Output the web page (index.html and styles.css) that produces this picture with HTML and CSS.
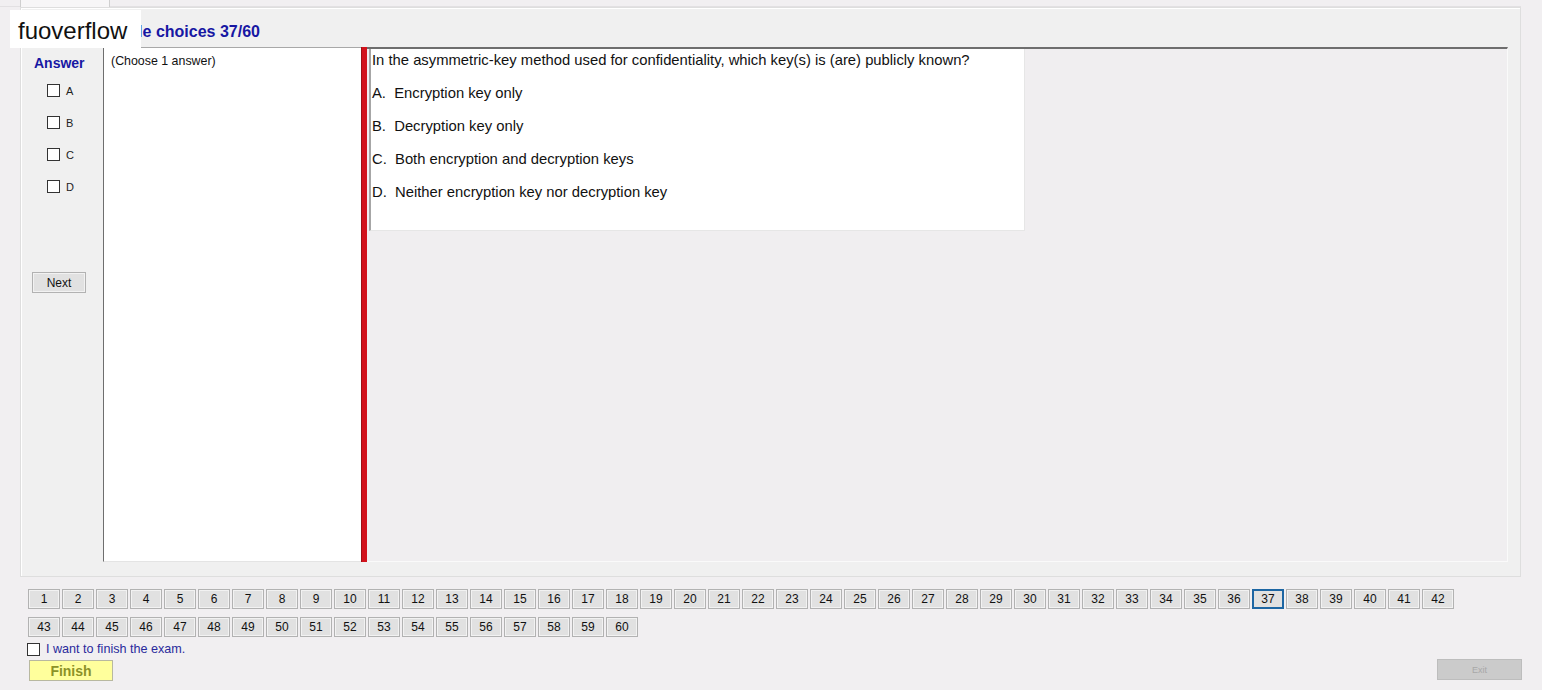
FILE: index.html
```html
<!DOCTYPE html>
<html>
<head>
<meta charset="utf-8">
<link rel="stylesheet" href="styles.css">
</head>
<body>
<div class="tabs"><div class="tab"></div></div>
<div class="panel">
  <div class="title">Multiple choices 37/60</div>
  <div class="content">
    <div class="answers">
      <div class="ans-head">Answer</div>
      <div class="opts">
        <label class="opt"><span class="cb"></span><span>A</span></label>
        <label class="opt"><span class="cb"></span><span>B</span></label>
        <label class="opt"><span class="cb"></span><span>C</span></label>
        <label class="opt"><span class="cb"></span><span>D</span></label>
      </div>
      <div class="btn next">Next</div>
    </div>
    <div class="hint">(Choose 1 answer)</div>
    <div class="splitter"></div>
    <div class="qarea">
      <div class="qbox">
        <p>In the asymmetric-key method used for confidentiality, which key(s) is (are) publicly known?</p>
        <p>A.&nbsp; Encryption key only</p>
        <p>B.&nbsp; Decryption key only</p>
        <p>C.&nbsp; Both encryption and decryption keys</p>
        <p>D.&nbsp; Neither encryption key nor decryption key</p>
      </div>
    </div>
  </div>
</div>
<div class="nav">
  <div class="row">
    <div class="btn num">1</div><div class="btn num">2</div><div class="btn num">3</div><div class="btn num">4</div><div class="btn num">5</div><div class="btn num">6</div><div class="btn num">7</div><div class="btn num">8</div><div class="btn num">9</div><div class="btn num">10</div><div class="btn num">11</div><div class="btn num">12</div><div class="btn num">13</div><div class="btn num">14</div><div class="btn num">15</div><div class="btn num">16</div><div class="btn num">17</div><div class="btn num">18</div><div class="btn num">19</div><div class="btn num">20</div><div class="btn num">21</div><div class="btn num">22</div><div class="btn num">23</div><div class="btn num">24</div><div class="btn num">25</div><div class="btn num">26</div><div class="btn num">27</div><div class="btn num">28</div><div class="btn num">29</div><div class="btn num">30</div><div class="btn num">31</div><div class="btn num">32</div><div class="btn num">33</div><div class="btn num">34</div><div class="btn num">35</div><div class="btn num">36</div><div class="btn num current">37</div><div class="btn num">38</div><div class="btn num">39</div><div class="btn num">40</div><div class="btn num">41</div><div class="btn num">42</div>
  </div>
  <div class="row">
    <div class="btn num">43</div><div class="btn num">44</div><div class="btn num">45</div><div class="btn num">46</div><div class="btn num">47</div><div class="btn num">48</div><div class="btn num">49</div><div class="btn num">50</div><div class="btn num">51</div><div class="btn num">52</div><div class="btn num">53</div><div class="btn num">54</div><div class="btn num">55</div><div class="btn num">56</div><div class="btn num">57</div><div class="btn num">58</div><div class="btn num">59</div><div class="btn num">60</div>
  </div>
</div>
<label class="finish-check"><span class="cb"></span><span>I want to finish the exam.</span></label>
<div class="footer">
  <div class="btn finish">Finish</div>
  <div class="btn exit">Exit</div>
</div>
<div class="watermark">fuoverflow</div>
</body>
</html>
```
FILE: styles.css
```css
* { box-sizing: border-box; }
html, body { margin: 0; padding: 0; }
body {
  width: 1542px;
  height: 690px;
  overflow: hidden;
  background: #f1eff1;
  font-family: "Liberation Sans", Arial, sans-serif;
  color: #111;
  position: relative;
}
.tabs {
  height: 7px;
  padding-left: 20px;
  border-bottom: 1px solid #e2e0e2;
  margin-right: 21px;
}
.tab {
  width: 90px;
  height: 7px;
  border-left: 1px solid #cfcfcf;
  border-right: 1px solid #cfcfcf;
  background: #f7f6f7;
}
.panel {
  margin-left: 20px;
  width: 1501px;
  height: 570px;
  background: #f0f0f0;
  border: 1px solid #dedede;
  box-shadow: inset 1px 1px 0 #fff;
  display: flex;
  flex-direction: column;
}
.title {
  height: 39px;
  padding-top: 15px;
  padding-left: 70px;
  font-weight: bold;
  font-size: 16px;
  line-height: 18px;
  color: #1717a3;
}
.content {
  display: flex;
  height: 515px;
}
.answers {
  width: 82px;
  padding-top: 8px;
  display: flex;
  flex-direction: column;
}
.ans-head {
  font-weight: bold;
  font-size: 14px;
  line-height: 16px;
  color: #1717a3;
  padding-left: 13px;
}
.opts {
  margin-top: 13px;
  display: flex;
  flex-direction: column;
  gap: 19px;
  padding-left: 26px;
}
.opt {
  display: flex;
  align-items: center;
  gap: 6px;
  height: 13px;
  font-size: 11px;
  color: #222;
}
.cb {
  display: inline-block;
  width: 13px;
  height: 13px;
  border: 1px solid #333;
  background: #fff;
}
.btn {
  display: flex;
  align-items: center;
  justify-content: center;
  background: #e1e1e1;
  border: 1px solid #b2b2b2;
  box-shadow: inset 0 0 0 1px #f2f2f2;
  font-size: 12px;
  color: #111;
}
.next {
  margin-top: 79px;
  margin-left: 11px;
  width: 54px;
  height: 21px;
}
.hint {
  width: 258px;
  background: #fff;
  border-left: 1px solid #6e6e6e;
  border-top: 1px solid #a8a8a8;
  border-bottom: 1px solid #e4e4e4;
  padding: 6px 0 0 7px;
  font-size: 12.4px;
  line-height: 14px;
}
.splitter {
  width: 6px;
  background: #d2121c;
  border-left: 1px solid #9e1016;
}
.qarea {
  width: 1141px;
  background: #f0eef0;
  border-top: 2px solid #6e6e6e;
  border-right: 1px solid #fafafa;
  border-bottom: 1px solid #fafafa;
  padding-left: 2px;
}
.qbox {
  width: 656px;
  height: 182px;
  background: #fff;
  border-left: 2px solid #a6a6a6;
  border-bottom: 1px solid #e6e6e6;
  border-right: 1px solid #e6e6e6;
  padding: 3px 0 0 1px;
}
.qbox p {
  margin: 0 0 17px;
  font-size: 14.8px;
  line-height: 16px;
  color: #111;
}
.nav {
  margin-top: 12px;
  padding-left: 28px;
  display: flex;
  flex-direction: column;
  gap: 8px;
}
.row {
  display: flex;
  gap: 2px;
}
.num {
  width: 32px;
  height: 20px;
}
.num.current {
  border: 2px solid #1d66a3;
  box-shadow: none;
}
.finish-check {
  margin-top: 5px;
  padding-left: 27px;
  display: flex;
  align-items: center;
  gap: 6px;
  height: 14px;
  font-size: 12.6px;
  color: #2a2a9c;
}
.footer {
  margin-top: 4px;
  padding-left: 29px;
  padding-right: 20px;
  display: flex;
  justify-content: space-between;
  align-items: flex-start;
}
.finish {
  width: 84px;
  height: 21px;
  background: #ffff9c;
  border-color: #b8b8a0;
  box-shadow: none;
  font-weight: bold;
  font-size: 14px;
  color: #8c9228;
}
.exit {
  margin-top: -1px;
  width: 85px;
  height: 21px;
  background: #cbcbcb;
  border-color: #bdbdbd;
  box-shadow: none;
  font-size: 9px;
  color: #a8a8a8;
}
.watermark {
  position: absolute;
  left: 10px;
  top: 10px;
  width: 131px;
  height: 38px;
  background: #fff;
  font-size: 24px;
  padding-top: 4px;
  line-height: 34px;
  padding-left: 8px;
  color: #111;
}
```
